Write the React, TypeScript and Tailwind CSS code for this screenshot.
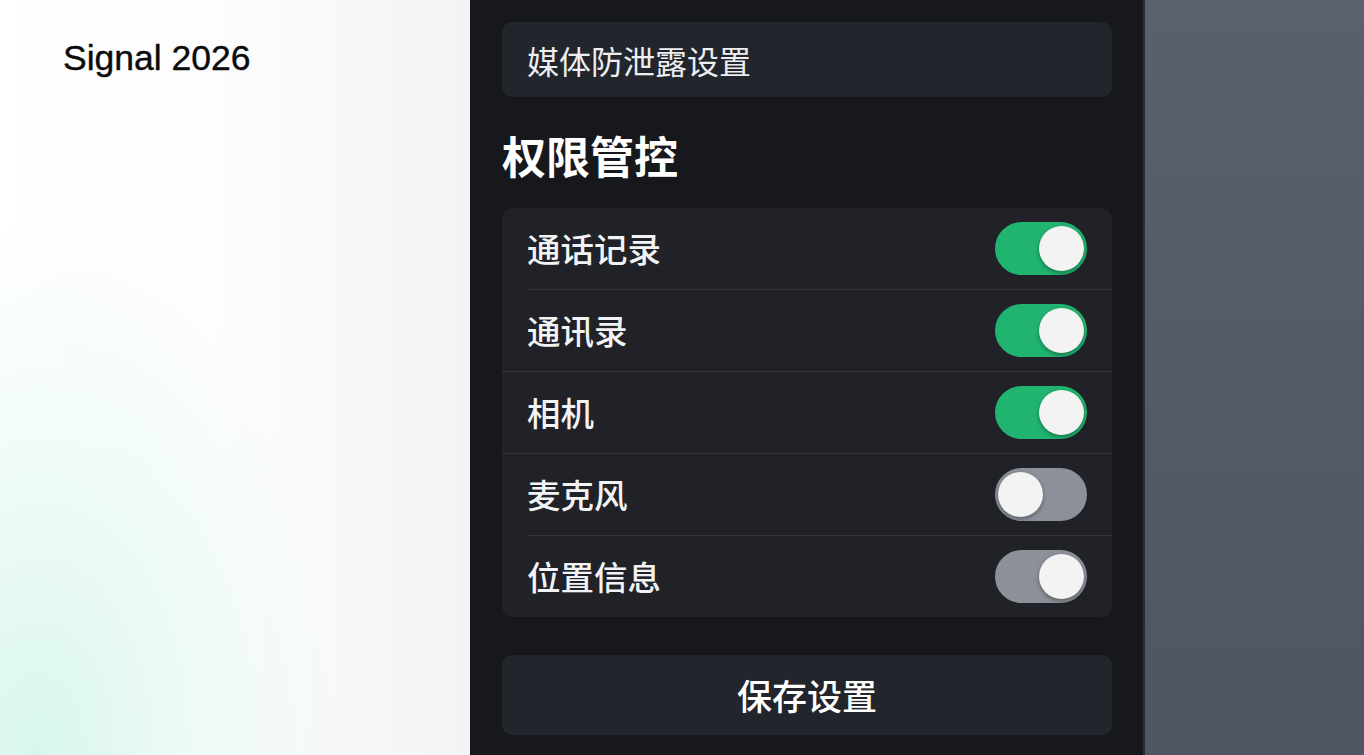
import React from 'react';

type Perm = { label: string; on: boolean; knobRight: boolean; insetDivider: boolean };

const perms: Perm[] = [
  { label: '通话记录', on: true, knobRight: true, insetDivider: true },
  { label: '通讯录', on: true, knobRight: true, insetDivider: false },
  { label: '相机', on: true, knobRight: true, insetDivider: false },
  { label: '麦克风', on: false, knobRight: false, insetDivider: true },
  { label: '位置信息', on: false, knobRight: true, insetDivider: false },
];

const cjk = "font-['Noto_Sans_CJK_SC','Noto_Sans',sans-serif]";

function Toggle({ on, knobRight }: { on: boolean; knobRight: boolean }) {
  return (
    <div
      className={`flex h-[53px] w-[92px] items-center rounded-full px-[3px] ${
        on ? 'bg-[#20b470]' : 'bg-[#8b9099]'
      } ${knobRight ? 'justify-end' : 'justify-start'}`}
    >
      <div className="h-[45px] w-[45px] rounded-full bg-[#f3f3f3] shadow-[0_2px_4px_rgba(0,0,0,0.35)]" />
    </div>
  );
}

export default function App() {
  return (
    <div className={`flex h-[755px] w-[1364px] overflow-hidden ${cjk}`}>
      {/* left light area */}
      <div className="w-[470px] shrink-0 bg-[radial-gradient(ellipse_at_8%_100%,#d8f7ea_0%,rgba(228,248,240,0.7)_22%,transparent_50%),linear-gradient(90deg,#ffffff_0%,#fdfdfd_45%,#f2f3f5_100%)] pl-[63px] pt-[36px]">
        <div className="font-['Liberation_Sans',Arial,sans-serif] text-[35.5px] leading-[44px] text-[#0b0b0b] [-webkit-text-stroke:0.4px_#0b0b0b]">
          Signal 2026
        </div>
      </div>

      {/* middle dark panel */}
      <div className="flex w-[673px] shrink-0 flex-col bg-[#17181b] px-[32px] pr-[31px]">
        <div className="mt-[22px] flex h-[75px] items-center rounded-[10px] bg-[#22252b] pl-[25px] text-[32px] font-normal text-[#eceef1]">
          媒体防泄露设置
        </div>

        <div className="flex h-[111px] items-center pt-[5px] text-[44px] font-bold text-white">
          权限管控
        </div>

        <div className="flex flex-col rounded-[10px] bg-[#202228]">
          {perms.map((p, i) => (
            <div key={p.label} className="flex flex-col">
              <div className="flex h-[81px] items-center justify-between pl-[25px] pr-[25px]">
                <span className="text-[33.5px] font-medium text-[#f2f3f5]">{p.label}</span>
                <Toggle on={p.on} knobRight={p.knobRight} />
              </div>
              {i < perms.length - 1 && (
                <div className={`h-px bg-[#33363d] ${p.insetDivider ? 'ml-[25px]' : ''}`} />
              )}
            </div>
          ))}
        </div>

        <div className="mt-[38px] flex h-[80px] items-center justify-center rounded-[10px] bg-[#22252b] text-[35px] font-medium text-white">
          保存设置
        </div>
      </div>

      {/* right gray area */}
      <div className="flex-1 border-l-2 border-[#2b2e34] bg-[linear-gradient(180deg,#5b616c_0%,#545a66_50%,#4f5562_100%)]" />
    </div>
  );
}
